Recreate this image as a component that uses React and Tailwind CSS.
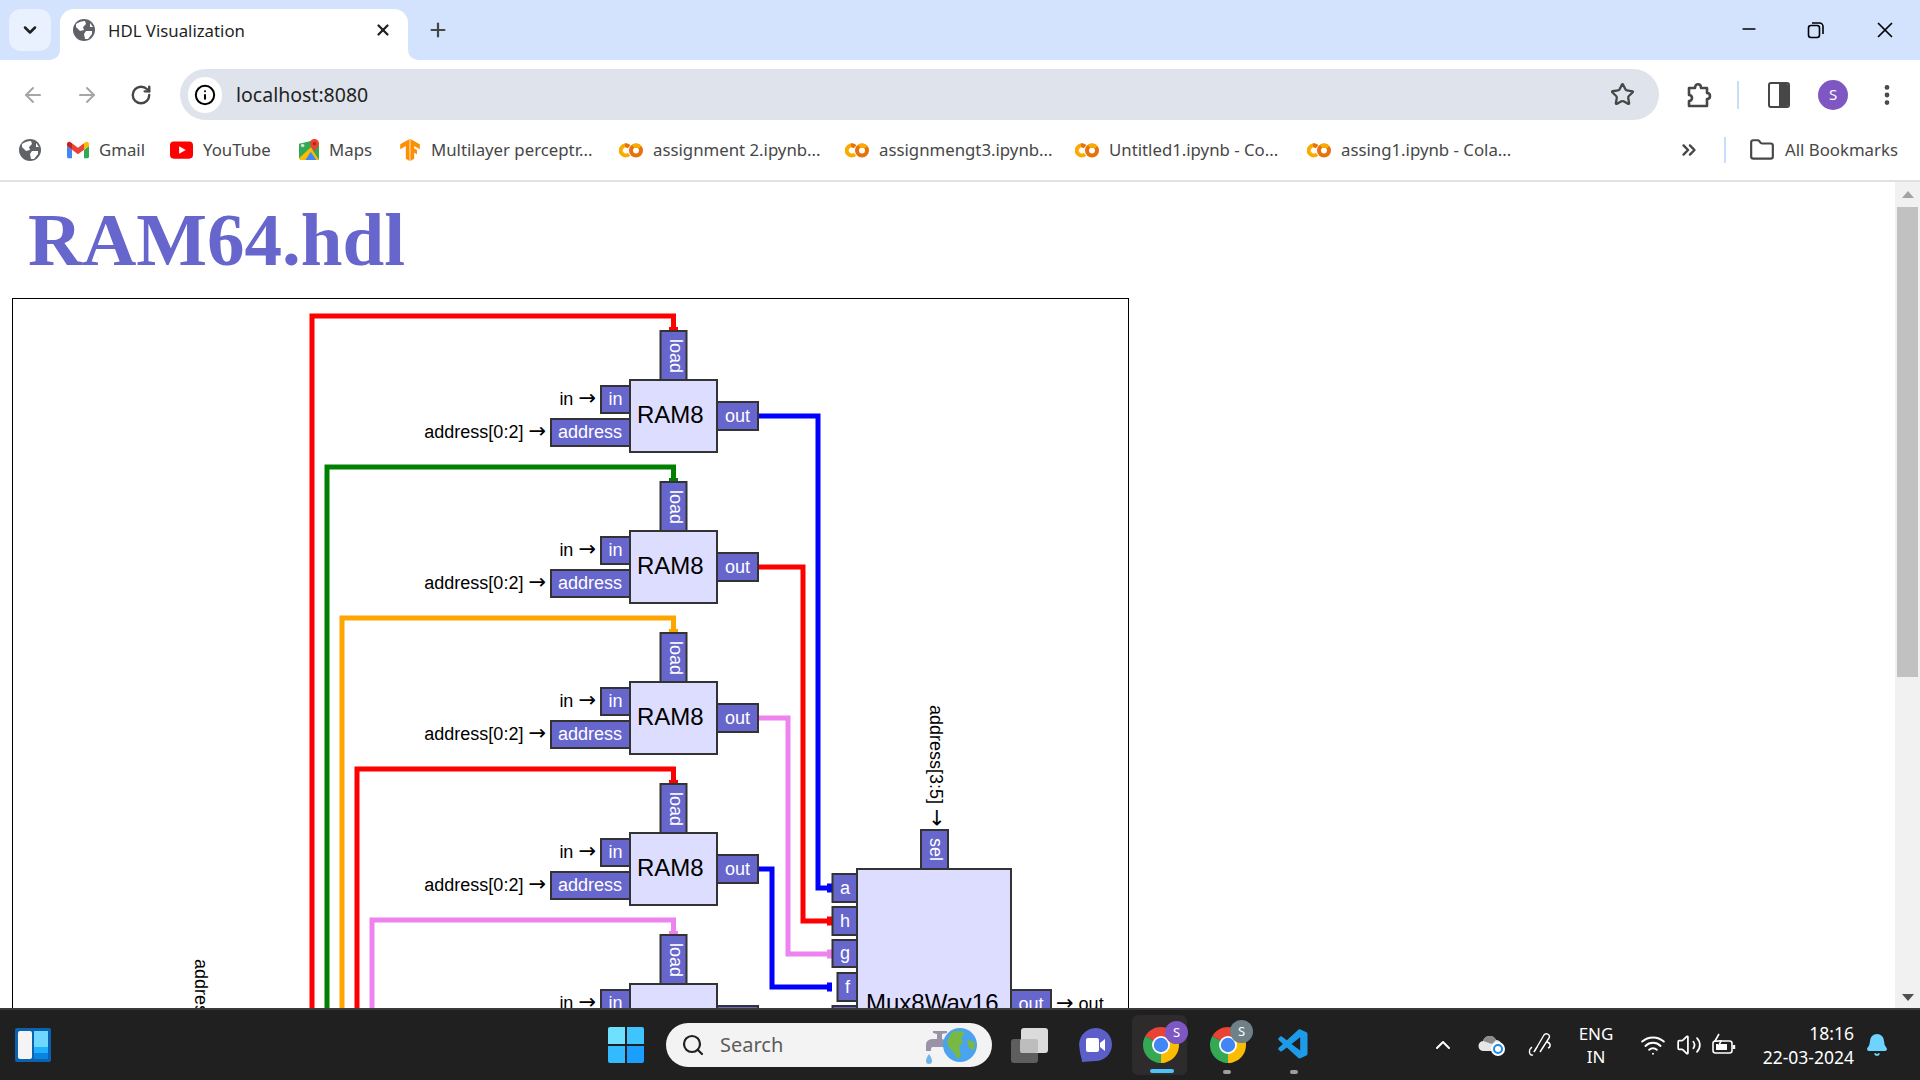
import {
  ArrowLeft,
  ArrowRight,
  Bell,
  ChevronDown,
  ChevronUp,
  ChevronsRight,
  EllipsisVertical,
  Folder,
  Info,
  Minus,
  Plus,
  RotateCw,
  Search,
  Star,
  Volume2,
  Wifi,
  X,
} from "lucide-react";
import { SiTensorflow } from "react-icons/si";
import { VscVscode } from "react-icons/vsc";

const RAM_STEP = 151;
const wires = [
  { color: "#ff0000", x: 312 },
  { color: "#008000", x: 327 },
  { color: "#ffa500", x: 342 },
  { color: "#ff0000", x: 357 },
  { color: "#ee82ee", x: 372 },
];
const outs = [
  { color: "#0000ff", x: 818, to: 888 },
  { color: "#ff0000", x: 803, to: 921 },
  { color: "#ee82ee", x: 788, to: 954 },
  { color: "#0000ff", x: 772, to: 987 },
];

function Arrow() {
  return <tspan className="font-['DejaVu_Sans',sans-serif]" fontSize="21">→</tspan>;
}

function Port({ x, y, w, h, label, tx, ty, rotate }) {
  return (
    <g>
      <rect x={x} y={y} width={w} height={h} fill="#6666cc" stroke="#333" strokeWidth="2" />
      <text
        x={rotate ? 0 : tx}
        y={rotate ? 0 : ty}
        fill="#fff"
        fontSize="18"
        textAnchor={rotate ? "start" : "middle"}
        transform={rotate ? `translate(${tx} ${ty}) rotate(90)` : undefined}
      >
        {label}
      </text>
    </g>
  );
}

function Ram({ i }) {
  const d = i * RAM_STEP;
  return (
    <g>
      <Port x={660.5} y={331 + d} w={26} h={49} label="load" tx={670} ty={339 + d} rotate />
      <Port x={601} y={386 + d} w={29} h={27} label="in" tx={615.5} ty={405 + d} />
      <Port x={551} y={419 + d} w={79} h={27} label="address" tx={590} ty={438 + d} />
      <Port x={717} y={402 + d} w={41} h={28} label="out" tx={737.5} ty={422 + d} />
      <rect x={630} y={380 + d} width={87} height={72} fill="#ddddff" stroke="#333" strokeWidth="2" />
      <text x={637} y={423 + d} fontSize="24" fill="#000">RAM8</text>
      <text x={596} y={405 + d} fontSize="18" fill="#000" textAnchor="end">in <Arrow /></text>
      <text x={546} y={438 + d} fontSize="18" fill="#000" textAnchor="end">address[0:2] <Arrow /></text>
    </g>
  );
}

function Diagram() {
  return (
    <svg width="1115" height="800" viewBox="13 299 1115 800" className="block font-['Liberation_Sans',sans-serif]">
      {wires.map((w, i) => (
        <g key={i}>
          <polyline
            points={`${w.x},1100 ${w.x},${316 + i * RAM_STEP} 673.5,${316 + i * RAM_STEP} 673.5,${330 + i * RAM_STEP}`}
            fill="none"
            stroke={w.color}
            strokeWidth="5"
          />
          <rect x={669} y={327 + i * RAM_STEP} width={9} height={4} fill={w.color} />
        </g>
      ))}
      {outs.map((w, i) => (
        <g key={i}>
          <polyline
            points={`758,${416 + i * RAM_STEP} ${w.x},${416 + i * RAM_STEP} ${w.x},${w.to} 832,${w.to}`}
            fill="none"
            stroke={w.color}
            strokeWidth="5"
          />
          <rect x={827} y={w.to - 4.5} width={5} height={9} fill={w.color} />
        </g>
      ))}
      {[0, 1, 2, 3, 4].map((i) => (
        <Ram key={i} i={i} />
      ))}

      <text transform="translate(195 959) rotate(90)" fontSize="18" fill="#000">address[0:5] <Arrow /></text>

      <text transform="translate(929.5 705) rotate(90)" fontSize="18" fill="#000">address[3:5] <Arrow /></text>
      <Port x={921} y={830} w={27} h={39} label="sel" tx={930} ty={838} rotate />
      <Port x={832.5} y={874} w={25} h={28} label="a" tx={845} ty={894} />
      <Port x={832.5} y={907} w={25} h={28} label="h" tx={845} ty={927} />
      <Port x={832.5} y={940} w={25} h={27} label="g" tx={845} ty={959} />
      <Port x={837.5} y={973} w={20} h={28} label="f" tx={847.5} ty={993} />
      <Port x={832.5} y={1006} w={25} h={28} label="e" tx={845} ty={1026} />
      <rect x={857} y={869} width={154} height={220} fill="#ddddff" stroke="#333" strokeWidth="2" />
      <text x={866} y={1011} fontSize="24" fill="#000">Mux8Way16</text>
      <Port x={1011} y={990} w={40} h={28} label="out" tx={1031} ty={1010} />
      <text x={1056} y={1010} fontSize="18" fill="#000"><Arrow /> out</text>
    </svg>
  );
}

function GlobeFavicon({ size = 22 }) {
  return (
    <svg width={size} height={size} viewBox="0 0 22 22" className="shrink-0">
      <circle cx="11" cy="11" r="11" fill="#5f6368" />
      <path d="M3 5 C6 3 9 2 12 2 L13 5 L10 8 L11 11 L7 12 L3 8 Z" fill="#fff" />
      <path d="M13 12 L19 12 L19 15 L15 20 L12 20 L11 15 Z" fill="#fff" />
      <path d="M17 4 L20 8 L17 8 Z" fill="#fff" />
    </svg>
  );
}

function Gmail() {
  return (
    <svg width="22" height="22" viewBox="0 0 24 24" className="shrink-0">
      <path fill="#4285f4" d="M1.636 21h3.819v-9.273L0 7.636v11.728C0 20.268.732 21 1.636 21z" />
      <path fill="#34a853" d="M18.545 21h3.819c.904 0 1.636-.732 1.636-1.636V7.636l-5.455 4.091z" />
      <path fill="#fbbc04" d="M18.545 4.636v7.091L24 7.636V5.455c0-2.023-2.309-3.178-3.927-1.964z" />
      <path fill="#ea4335" d="M5.455 11.727V4.636L12 9.545l6.545-4.909v7.091L12 16.636z" />
      <path fill="#c5221f" d="M0 5.455v2.181l5.455 4.091V4.636L3.927 3.491C2.309 2.277 0 3.432 0 5.455z" />
    </svg>
  );
}

function YouTube() {
  return (
    <svg width="23" height="18" viewBox="0 0 24 18" className="-ml-[1px] shrink-0">
      <rect width="24" height="18" rx="4" fill="#ff0000" />
      <path d="M9.5 5 L16.5 9 L9.5 13 Z" fill="#fff" />
    </svg>
  );
}

function Maps() {
  return (
    <svg width="20" height="24" viewBox="0 0 22 24" className="shrink-0">
      <path d="M0 5 L13 2 L22 5 L22 23 L2 23 L0 21 Z" fill="#34a853" />
      <path d="M0 21 L13 9 L22 23 L2 23 Z" fill="#fbbc04" />
      <path d="M7 23 L13 14 L19 23 Z" fill="#4285f4" />
      <circle cx="4" cy="7" r="2" fill="#c8e6c9" />
      <path d="M17 0 C13.5 0 12 3 12 5 C12 8 15.5 10 17 14 C18.5 10 22 8 22 5 C22 3 20.5 0 17 0 Z" fill="#ea4335" />
      <circle cx="17" cy="5" r="1.8" fill="#a52714" />
    </svg>
  );
}

function Colab() {
  return (
    <svg width="24" height="15" viewBox="0 0 24 14" className="-ml-[3px] shrink-0">
      <path d="M10 3.2 A5 5 0 1 0 10 10.8" fill="none" stroke="#f9ab00" strokeWidth="4" />
      <path d="M10 3.2 A5 5 0 0 0 6 1.8" fill="none" stroke="#e8710a" strokeWidth="4" />
      <circle cx="17" cy="7" r="5" fill="none" stroke="#e8710a" strokeWidth="4" />
      <path d="M14 3 A5 5 0 0 1 21 4" fill="none" stroke="#f9ab00" strokeWidth="4" />
    </svg>
  );
}

function Bookmark({ icon, label, className }) {
  return (
    <div className="flex items-center gap-[10px]">
      {icon}
      <span className={className}>{label}</span>
    </div>
  );
}

function ChromeLogo() {
  return (
    <svg width="36" height="36" viewBox="4 4 40 40">
      <path d="M24 24 L6.68 14 A20 20 0 0 1 41.32 14 Z" fill="#ea4335" />
      <path d="M24 24 L6.68 14 A20 20 0 0 0 24 44 Z" fill="#34a853" />
      <path d="M24 24 L41.32 14 A20 20 0 0 1 24 44 Z" fill="#fbbc04" />
      <circle cx="24" cy="24" r="10" fill="#fff" />
      <circle cx="24" cy="24" r="8" fill="#4285f4" />
    </svg>
  );
}

function WindowsLogo() {
  return (
    <div className="ml-[557px] grid h-[36px] w-[36px] grid-cols-2 gap-[2px]">
      <div className="rounded-tl-[2px] bg-[#6fe0ff]" />
      <div className="rounded-tr-[2px] bg-[#3fc4ff]" />
      <div className="rounded-bl-[2px] bg-[#34bbff]" />
      <div className="rounded-br-[2px] bg-[#1a9fff]" />
    </div>
  );
}

function SearchArt() {
  return (
    <svg width="54" height="38" viewBox="0 0 54 38">
      <path d="M1 19 C1 14 5 13 9 13 L12 13 L12 8 L8 7 L8 5 L22 5 L22 7 L17 8 L17 13 L21 14 L21 21 L8 21 C6 21 6 23 6 25 L1 25 Z" fill="#9a93a8" />
      <path d="M4 28 C6 31 7 33 7 35 A3 3 0 0 1 1 35 C1 33 2 31 4 28 Z" fill="#6fb5ea" />
      <circle cx="35" cy="19" r="17" fill="#4aa3ee" />
      <path d="M27 6 C32 4 37 5 40 7 L36 12 L38 16 L34 21 L36 30 L32 33 L29 26 L24 22 L22 15 Z" fill="#78b843" />
      <path d="M42 14 L50 16 L49 24 L44 22 Z" fill="#78b843" />
    </svg>
  );
}

export default function App() {
  return (
    <div className="flex h-[1080px] w-[1920px] flex-col overflow-hidden bg-white font-['Noto_Sans',sans-serif]">
      {/* tab strip */}
      <div className="flex h-[60px] shrink-0 items-start bg-[#d3e3fd]">
        <div className="ml-[9px] mt-[9px] flex h-[42px] w-[42px] items-center justify-center rounded-[12px] bg-[#e9f1fe]">
          <ChevronDown size={20} strokeWidth={3} className="text-[#1f1f1f]" />
        </div>
        <div className="relative ml-[9px] mt-[9px] flex h-[51px] w-[348px] items-center rounded-t-[14px] bg-white pb-[9px] pl-[13px]">
          <div className="absolute bottom-0 left-[-10px] h-[10px] w-[10px] bg-white">
            <div className="h-full w-full rounded-br-[10px] bg-[#d3e3fd]" />
          </div>
          <div className="absolute bottom-0 right-[-10px] h-[10px] w-[10px] bg-white">
            <div className="h-full w-full rounded-bl-[10px] bg-[#d3e3fd]" />
          </div>
          <GlobeFavicon />
          <span className="ml-[13px] mt-[2px] w-[266px] text-[16.8px] text-[#1f1f1f]">HDL Visualization</span>
          <X size={18} strokeWidth={3} className="text-[#1f1f1f]" />
        </div>
        <Plus size={22} strokeWidth={2.4} className="ml-[19px] mt-[19px] text-[#444746]" />
        <Minus size={20} strokeWidth={2} className="ml-[1290px] mt-[19px] text-black" />
        <svg width="18" height="18" viewBox="0 0 18 18" className="ml-[48px] mt-[21px]">
          <rect x="1.5" y="4.5" width="11" height="12" rx="2.5" fill="none" stroke="#000" strokeWidth="1.6" />
          <path d="M5 2 H12.5 A3.5 3.5 0 0 1 16 5.5 V13" fill="none" stroke="#000" strokeWidth="1.6" />
        </svg>
        <X size={26} strokeWidth={1.6} className="ml-[47px] mt-[17px] text-black" />
      </div>

      {/* toolbar */}
      <div className="flex h-[60px] shrink-0 items-center bg-white pt-[9px]">
        <ArrowLeft size={24} strokeWidth={2} className="ml-[21px] text-[#a6a6a6]" />
        <ArrowRight size={24} strokeWidth={2} className="ml-[30px] text-[#a6a6a6]" />
        <RotateCw size={22} strokeWidth={2.6} className="ml-[31px] text-[#474747]" />
        <div className="ml-[28px] flex h-[51px] w-[1479px] items-center rounded-full bg-[#dfe3eb] pl-[8px]">
          <div className="flex h-[36px] w-[34px] items-center justify-center rounded-full bg-white">
            <Info size={22} strokeWidth={2.2} className="text-black" />
          </div>
          <span className="ml-[14px] w-[1374px] text-[19.5px] text-[#1f1f1f]">localhost:8080</span>
          <Star size={25} strokeWidth={2.2} className="text-[#474747]" />
        </div>
        <svg width="26" height="28" viewBox="0 0 26 28" fill="none" stroke="#474747" strokeWidth="2.6" strokeLinejoin="round" className="ml-[27px]">
          <path d="M3 7 H9 C9 2 15 2 15 7 H21 V12 C25 12 25 18 21 18 V25 H3 V20 C7 20 7 14 3 14 Z" />
        </svg>
        <div className="ml-[25px] h-[28px] w-[2px] bg-[#c9dcf8]" />
        <div className="ml-[29px] flex h-[26px] w-[22px] overflow-hidden rounded-[3px] border-[2.5px] border-[#474747]">
          <div className="w-1/2" />
          <div className="w-1/2 bg-[#474747]" />
        </div>
        <div className="ml-[28px] flex h-[30px] w-[30px] items-center justify-center rounded-full bg-[#7e57c2] text-[15px] text-white">S</div>
        <EllipsisVertical size={26} strokeWidth={2.4} className="ml-[26px] text-[#474747]" />
      </div>

      {/* bookmarks bar */}
      <div className="flex h-[62px] shrink-0 items-center border-b-2 border-[#e1e1e1] bg-white text-[16.8px] text-[#474747]">
        <div className="ml-[19px] mr-[26px]">
          <GlobeFavicon />
        </div>
        <div className="flex items-center gap-[28px]">
          <Bookmark icon={<Gmail />} label="Gmail" className="w-[44px]" />
          <Bookmark icon={<YouTube />} label="YouTube" className="w-[68px]" />
          <Bookmark icon={<Maps />} label="Maps" className="w-[42px]" />
          <Bookmark icon={<SiTensorflow size={22} color="#ff8f00" />} label="Multilayer perceptr..." className="w-[163px] whitespace-nowrap" />
          <Bookmark icon={<Colab />} label="assignment 2.ipynb..." className="w-[167px] whitespace-nowrap" />
          <Bookmark icon={<Colab />} label="assignmengt3.ipynb..." className="w-[171px] whitespace-nowrap" />
          <Bookmark icon={<Colab />} label="Untitled1.ipynb - Co..." className="w-[173px] whitespace-nowrap" />
          <Bookmark icon={<Colab />} label="assing1.ipynb - Cola..." className="w-[172px] whitespace-nowrap" />
        </div>
        <ChevronsRight size={22} strokeWidth={2.6} className="ml-[165px] text-[#474747]" />
        <div className="ml-[24px] h-[26px] w-[2px] bg-[#c9dcf8]" />
        <Folder size={26} strokeWidth={2} className="ml-[23px] text-[#474747]" />
        <span className="ml-[10px] whitespace-nowrap">All Bookmarks</span>
      </div>

      {/* page */}
      <div className="flex min-h-0 flex-1">
        <main className="min-w-0 flex-1 overflow-hidden">
          <h1 className="h-[116px] pl-[28px] pt-[15px] font-['Liberation_Serif',serif] text-[75px] font-bold leading-[86px] text-[#6666cc]">
            RAM64.hdl
          </h1>
          <div className="ml-[12px] w-[1117px] border border-black">
            <Diagram />
          </div>
        </main>
        <div className="flex w-[25px] shrink-0 flex-col items-center bg-[#f1f1f1] px-[2px]">
          <div className="mt-[9px] h-0 w-0 border-x-[6px] border-b-[7px] border-x-transparent border-b-[#a3a3a3]" />
          <div className="mt-[9px] h-[470px] w-full bg-[#c1c1c1]" />
          <div className="mb-[7px] mt-auto h-0 w-0 border-x-[6px] border-t-[7px] border-x-transparent border-t-[#505050]" />
        </div>
      </div>

      {/* taskbar */}
      <div className="flex h-[72px] shrink-0 items-center border-t-2 border-[#3a3a3a] bg-[#202020] text-white">
        <div className="ml-[15px] flex h-[34px] w-[36px] gap-[2px] rounded-[2px] bg-[#0b62b0] p-[3px]">
          <div className="w-[14px] rounded-[2px] bg-[#f4f4f4]" />
          <div className="flex w-[14px] flex-col">
            <div className="h-[16px] bg-[#6fd8ff]" />
            <div className="h-[6px] bg-[#1fb0ff]" />
            <div className="h-[6px] bg-[#0a84e0]" />
          </div>
        </div>
        <WindowsLogo />
        <div className="ml-[22px] flex h-[44px] w-[326px] items-center rounded-full bg-[#f3f3f3] pl-[15px]">
          <Search size={24} strokeWidth={2.2} className="text-[#202020]" />
          <span className="ml-[15px] w-[205px] text-[20px] text-[#5c5c5c]">Search</span>
          <SearchArt />
        </div>
        <div className="relative ml-[19px] h-[34px] w-[37px]">
          <div className="absolute left-0 top-[11px] h-[24px] w-[27px] rounded-[3px] bg-[#5e5e5e]" />
          <div className="absolute right-0 top-0 h-[25px] w-[27px] rounded-[3px] bg-[#f0f0f0] opacity-90" />
          <div className="absolute left-[9px] top-[11px] h-[14px] w-[18px] rounded-[2px] bg-[#bdbdbd]" />
        </div>
        <svg width="33" height="34" viewBox="0 0 33 34" className="ml-[31px]">
          <path d="M16.5 0 A16.5 16.5 0 0 1 16.5 33 L3 34 C3 30 1 27 0.5 20 A16.5 16.5 0 0 1 16.5 0 Z" fill="#5b5fc7" />
          <rect x="7" y="10" width="13" height="14" rx="2" fill="#fff" />
          <path d="M21 15 L26 11 V23 L21 19 Z" fill="#fff" />
        </svg>
        <div className="relative ml-[20px] flex h-[60px] w-[55px] justify-center rounded-[6px] bg-[#2e2b2d] pt-[12px]">
          <div className="ml-[3px]">
            <ChromeLogo />
          </div>
          <div className="absolute left-[33px] top-[6px] flex h-[23px] w-[23px] items-center justify-center rounded-full bg-[#7e57c2] text-[13px]">S</div>
          <div className="absolute bottom-[2px] left-[18px] h-[4px] w-[24px] rounded-full bg-[#4fc3f7]" />
        </div>
        <div className="relative ml-[23px] h-[36px] w-[36px]">
          <ChromeLogo />
          <div className="absolute left-[20px] top-[-7px] flex h-[23px] w-[23px] items-center justify-center rounded-full bg-[#6e8088] text-[13px]">S</div>
          <div className="absolute bottom-[-11px] left-[13px] h-[4px] w-[8px] rounded-full bg-[#9e9e9e]" />
        </div>
        <div className="relative ml-[30px] h-[36px] w-[36px]">
          <VscVscode size={36} color="#1e9be8" />
          <div className="absolute bottom-[-11px] left-[14px] h-[4px] w-[8px] rounded-full bg-[#9e9e9e]" />
        </div>
        <ChevronUp size={24} strokeWidth={2} className="ml-[119px] text-white" />
        <svg width="28" height="24" viewBox="0 0 28 24" className="ml-[23px]">
          <path d="M6 18 A5 5 0 0 1 5 8 A7 7 0 0 1 18 7 A5 5 0 0 1 23 14 L16 18 Z" fill="#e6e6e6" />
          <path d="M5 8 A7 7 0 0 1 18 7 L14 11 Z" fill="#8c8c8c" />
          <circle cx="20" cy="16" r="7" fill="#fff" />
          <circle cx="20" cy="16" r="4" fill="none" stroke="#1e88e5" strokeWidth="2" />
        </svg>
        <svg width="24" height="28" viewBox="0 0 24 28" className="ml-[22px]" fill="none" stroke="#fff" strokeWidth="1.4">
          <path d="M6 21 L16 4 C18 1 23 4 21 7 L12 21" />
          <path d="M6 21 L9 16" />
          <path d="M4 16 C0 19 1 25 5 24" />
          <path d="M19 11 C23 12 23 16 20 17" />
        </svg>
        <div className="ml-[24px] w-[40px] text-center text-[17px] leading-[23px]">
          <div>ENG</div>
          <div>IN</div>
        </div>
        <Wifi size={26} strokeWidth={1.8} className="ml-[24px]" />
        <Volume2 size={26} strokeWidth={1.6} className="ml-[10px]" />
        <svg width="26" height="24" viewBox="0 0 26 24" fill="none" stroke="#fff" strokeWidth="1.6" className="ml-[9px]">
          <rect x="2" y="8" width="19" height="12" rx="2.5" />
          <rect x="5" y="11" width="11" height="6" fill="#fff" stroke="none" />
          <path d="M23 12 V16" strokeWidth="2.4" />
          <path d="M8 1 L4 8 H10 L7 14" fill="#202020" />
        </svg>
        <div className="ml-[12px] -mt-[1px] w-[105px] text-right text-[17.5px] leading-[24px]">
          <div>18:16</div>
          <div className="whitespace-nowrap">22-03-2024</div>
        </div>
        <Bell size={24} fill="#6fd3ff" color="#6fd3ff" className="ml-[11px]" />
      </div>
    </div>
  );
}
